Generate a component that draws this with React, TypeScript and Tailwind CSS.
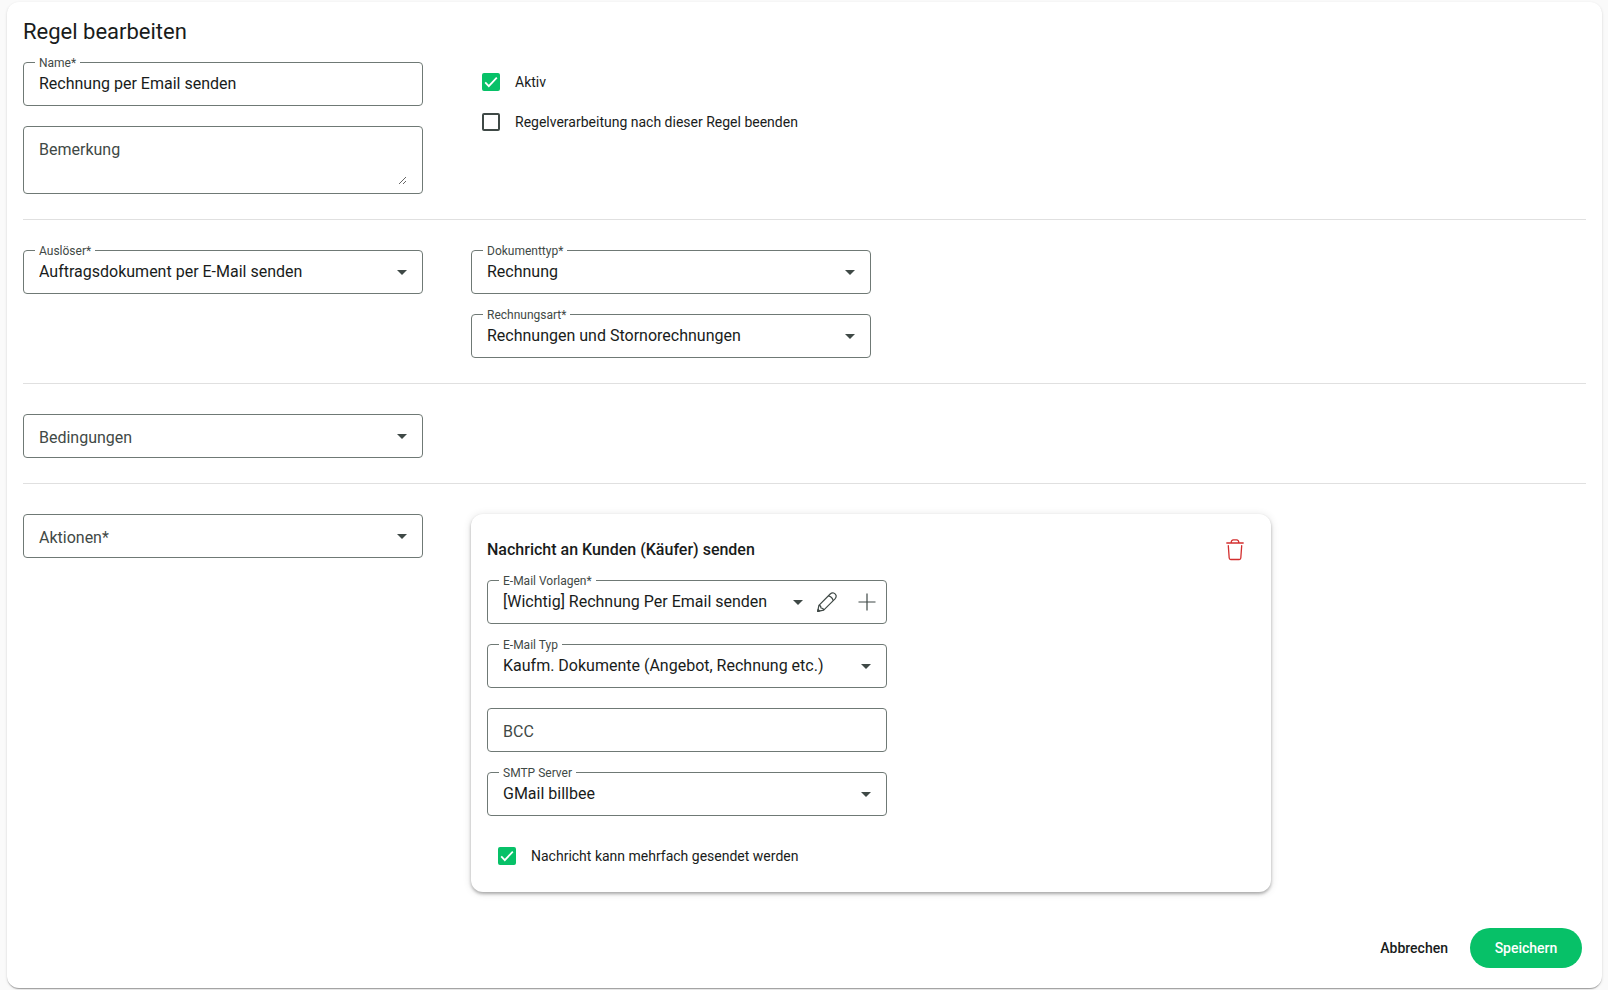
import { useState } from 'react';
import type { ReactNode } from 'react';

const boxStyles = 'relative flex w-full rounded border border-[#6f7975] bg-white';
const controlStyles = 'w-full min-w-0 flex-1 appearance-none bg-transparent text-base text-[#191c1b] outline-none';

type FieldProps = {
  id: string;
  label: string;
  value?: string;
};

function FieldLabel({ id, label, floating }: { id: string; label: string; floating: boolean }) {
  return (
    <label
      htmlFor={id}
      className={
        floating
          ? 'absolute -top-2 left-[11px] bg-white px-1 text-xs text-[#3f4946]'
          : 'pointer-events-none absolute top-[11px] left-[15px] text-base text-[#3f4946]'
      }
    >
      {label}
    </label>
  );
}

function Arrow() {
  return (
    <svg width="10" height="5" viewBox="0 0 10 5" className="pointer-events-none shrink-0" aria-hidden="true">
      <path d="M0 0h10L5 5z" fill="#3f4946" />
    </svg>
  );
}

function TextField({ id, label, value = '' }: FieldProps) {
  const [text, setText] = useState<string>(value);

  return (
    <div className={`${boxStyles} h-11 items-center px-[15px]`}>
      <FieldLabel id={id} label={label} floating={text !== ''} />
      <input id={id} type="text" value={text} onChange={(e) => setText(e.target.value)} className={`${controlStyles} h-full pb-0.5`} />
    </div>
  );
}

function TextArea({ id, label }: FieldProps) {
  const [text, setText] = useState<string>('');

  return (
    <div className={`${boxStyles} px-[15px] pt-3 pb-2`}>
      <FieldLabel id={id} label={label} floating={text !== ''} />
      <textarea id={id} value={text} onChange={(e) => setText(e.target.value)} className={`${controlStyles} h-[46px] resize-y`} />
    </div>
  );
}

function SelectField({ id, label, value = '', children }: FieldProps & { children?: ReactNode }) {
  return (
    <div className={`${boxStyles} h-11 items-center pl-[15px] ${children ? '' : 'pr-[15px]'}`}>
      <FieldLabel id={id} label={label} floating={value !== ''} />
      <select id={id} defaultValue={value} className={`${controlStyles} h-full`}>
        <option value={value}>{value}</option>
      </select>
      <Arrow />
      {children && <div className="-mr-px ml-1 flex shrink-0">{children}</div>}
    </div>
  );
}

function Checkbox({ id, label, checked = false }: { id: string; label: string; checked?: boolean }) {
  return (
    <div className="flex h-10 items-center gap-[15px] pl-[11px]">
      <span className="relative flex size-[18px]">
        <input
          id={id}
          type="checkbox"
          defaultChecked={checked}
          className="peer size-[18px] appearance-none rounded-xs border-2 border-[#3f4946] checked:border-[#07c168] checked:bg-[#07c168]"
        />
        <svg viewBox="0 0 18 18" className="pointer-events-none absolute inset-0 hidden peer-checked:block" aria-hidden="true">
          <path d="M3.2 9.4l3.6 3.7 8-8.4" fill="none" stroke="#fff" strokeWidth="1.8" />
        </svg>
      </span>
      <label htmlFor={id} className="text-sm text-[#191c1b]">
        {label}
      </label>
    </div>
  );
}

function PencilIcon() {
  return (
    <svg width="20" height="20" viewBox="0 0 20 20" fill="none" stroke="#3f4946" strokeWidth="1.2" strokeLinejoin="round" aria-hidden="true">
      <path d="M.7 19.3l1.2-6L13.2 2q1.7-1.6 3.5-1 1.6.7 2.3 2.3.6 1.8-1 3.5L6.7 18.1z" />
      <path d="M1.9 13.3q2 0 2.1 2.7 2.6.1 2.7 2.1M11.4 3.8q3.8.9 4.8 4.8" />
      <path d="M.7 19.3l.4-1.9 1.5 1.5z" fill="#3f4946" />
    </svg>
  );
}

function PlusIcon() {
  return (
    <svg width="18" height="18" viewBox="0 0 18 18" fill="none" stroke="#3f4946" strokeWidth="1.2" aria-hidden="true">
      <path d="M9 .5v17M.5 9h17" />
    </svg>
  );
}

function TrashIcon() {
  return (
    <svg width="18" height="22" viewBox="0 0 18 22" fill="none" stroke="#d32f2f" strokeWidth="1.3" strokeLinejoin="round" strokeLinecap="round" aria-hidden="true">
      <path d="M.8 4h16.4M5.2 3.8q0-3 2.2-3h3.2q2.2 0 2.2 3M2.3 6.6l.9 12.4q.1 1.5 1.5 1.5h8.6q1.4 0 1.5-1.5l.9-12.4" />
    </svg>
  );
}

function Section({ children }: { children: ReactNode }) {
  return <section className="flex items-start gap-12 border-t border-[#e0e0e0] pt-[30px] pb-[25px]">{children}</section>;
}

function App() {
  return (
    <div className="min-h-screen bg-[#fafafa] pt-0.5 pr-1.5 pb-0.5 pl-[7px] font-[Roboto,'Liberation_Sans',sans-serif] text-[#191c1b]">
      <form
        onSubmit={(e) => e.preventDefault()}
        className="rounded-xl bg-white px-4 pt-4 pb-5 shadow-[0_2px_1px_-1px_rgba(0,0,0,0.2),0_1px_1px_0_rgba(0,0,0,0.14),0_1px_3px_0_rgba(0,0,0,0.12)]"
      >
        <h1 className="text-[22px] leading-7">Regel bearbeiten</h1>

        <div className="flex items-start gap-12 pt-4 pb-[25px]">
          <div className="flex w-[400px] flex-col gap-5">
            <TextField id="name" label="Name*" value="Rechnung per Email senden" />
            <TextArea id="remark" label="Bemerkung" />
          </div>
          <div className="flex flex-col">
            <Checkbox id="active" label="Aktiv" checked />
            <Checkbox id="stop" label="Regelverarbeitung nach dieser Regel beenden" />
          </div>
        </div>

        <Section>
          <div className="w-[400px]">
            <SelectField id="trigger" label="Auslöser*" value="Auftragsdokument per E-Mail senden" />
          </div>
          <div className="flex w-[400px] flex-col gap-5">
            <SelectField id="doctype" label="Dokumenttyp*" value="Rechnung" />
            <SelectField id="invoicetype" label="Rechnungsart*" value="Rechnungen und Stornorechnungen" />
          </div>
        </Section>

        <Section>
          <div className="w-[400px]">
            <SelectField id="conditions" label="Bedingungen" />
          </div>
        </Section>

        <section className="flex items-start gap-12 border-t border-[#e0e0e0] pt-[30px] pb-9">
          <div className="w-[400px] shrink-0">
            <SelectField id="actions" label="Aktionen*" />
          </div>
          <div className="w-full max-w-[800px] rounded-xl bg-white p-4 shadow-[0_2px_4px_-1px_rgba(0,0,0,0.2),0_2px_3px_0_rgba(0,0,0,0.16),0_1px_8px_0_rgba(0,0,0,0.12)]">
            <div className="flex h-10 items-center justify-between">
              <h2 className="text-base font-medium">Nachricht an Kunden (Käufer) senden</h2>
              <button type="button" aria-label="Aktion löschen" className="flex size-10 items-center justify-center">
                <TrashIcon />
              </button>
            </div>
            <div className="flex max-w-[400px] flex-col gap-5 pt-2.5">
              <SelectField id="template" label="E-Mail Vorlagen*" value="[Wichtig] Rechnung Per Email senden">
                <button type="button" aria-label="Vorlage bearbeiten" className="flex size-10 items-center justify-center">
                  <PencilIcon />
                </button>
                <button type="button" aria-label="Vorlage hinzufügen" className="flex size-10 items-center justify-center">
                  <PlusIcon />
                </button>
              </SelectField>
              <SelectField id="mailtype" label="E-Mail Typ" value="Kaufm. Dokumente (Angebot, Rechnung etc.)" />
              <TextField id="bcc" label="BCC" />
              <SelectField id="smtp" label="SMTP Server" value="GMail billbee" />
              <Checkbox id="multiple" label="Nachricht kann mehrfach gesendet werden" checked />
            </div>
          </div>
        </section>

        <div className="flex items-center justify-end gap-2.5 pr-1 text-sm font-medium">
          <button type="button" className="h-10 px-3">
            Abbrechen
          </button>
          <button type="submit" className="h-10 min-w-28 rounded-full bg-[#07c168] px-6 text-white">
            Speichern
          </button>
        </div>
      </form>
    </div>
  );
}

export default App;
